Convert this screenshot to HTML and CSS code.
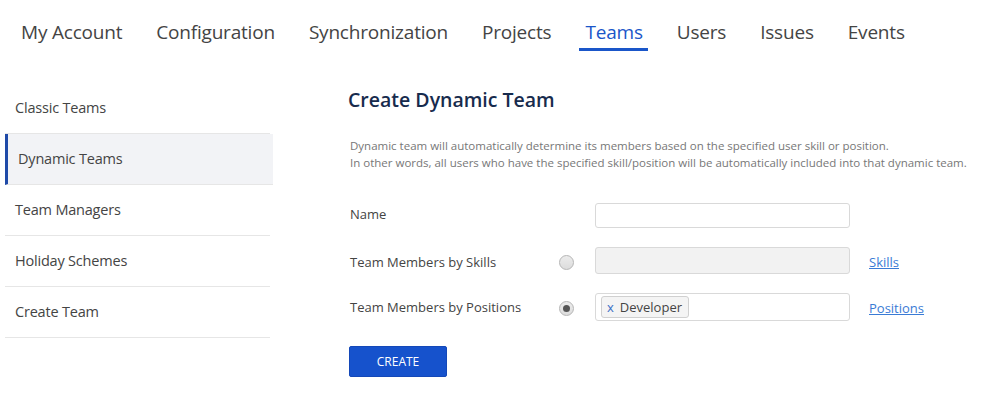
FILE: index.html
```
<!DOCTYPE html>
<html>
<head>
<meta charset="utf-8">
<link rel="stylesheet" href="styles.css">
</head>
<body>
<nav class="topnav">
  <a class="tab">My Account</a>
  <a class="tab">Configuration</a>
  <a class="tab">Synchronization</a>
  <a class="tab">Projects</a>
  <a class="tab active">Teams</a>
  <a class="tab">Users</a>
  <a class="tab">Issues</a>
  <a class="tab">Events</a>
</nav>
<div class="layout">
  <aside class="sidebar">
    <div class="side-item">Classic Teams</div>
    <div class="side-item active">Dynamic Teams</div>
    <div class="side-item">Team Managers</div>
    <div class="side-item">Holiday Schemes</div>
    <div class="side-item">Create Team</div>
  </aside>
  <main class="content">
    <h1 class="title">Create Dynamic Team</h1>
    <p class="desc">Dynamic team will automatically determine its members based on the specified user skill or position.<br>In other words, all users who have the specified skill/position will be automatically included into that dynamic team.</p>
    <div class="form">
      <div class="row r-name">
        <div class="label">Name</div>
        <div class="radio-cell"></div>
        <div class="field"></div>
        <div class="link-cell"></div>
      </div>
      <div class="row r-skills">
        <div class="label">Team Members by Skills</div>
        <div class="radio-cell"><span class="radio"></span></div>
        <div class="field disabled"></div>
        <div class="link-cell"><a class="link">Skills</a></div>
      </div>
      <div class="row r-pos">
        <div class="label">Team Members by Positions</div>
        <div class="radio-cell"><span class="radio checked"></span></div>
        <div class="field tags"><span class="tag"><span class="tag-x">x</span>Developer</span></div>
        <div class="link-cell"><a class="link">Positions</a></div>
      </div>
    </div>
    <button class="btn">CREATE</button>
  </main>
</div>
</body>
</html>
```
FILE: styles.css
```
* { box-sizing: border-box; }
body {
  margin: 0;
  background: #fff;
  font-family: "Open Sans", "Noto Sans", sans-serif;
  color: #444;
}
.topnav {
  display: flex;
  align-items: flex-start;
  gap: 34px;
  padding: 18px 0 0 21px;
  height: 83px;
}
.tab {
  font-size: 19px;
  letter-spacing: -0.2px;
  color: #444;
  line-height: 28px;
  padding: 0 0 3px;
  position: relative;
}
.tab.active {
  color: #1a56c9;
}
.tab.active::after {
  content: "";
  position: absolute;
  left: -6px;
  right: -5px;
  bottom: -2px;
  height: 3px;
  background: #1a56c9;
}
.layout {
  display: flex;
  padding-left: 5px;
}
.sidebar {
  width: 265px;
  flex: none;
}
.side-item {
  height: 51px;
  line-height: 50px;
  font-size: 14.5px;
  color: #444;
  padding-left: 10px;
  border-bottom: 1px solid #e6e6e6;
  letter-spacing: -0.2px;
}
.side-item.active {
  background: #f2f3f6;
  border-left: 3px solid #1f4aa8;
  padding-left: 10px;
  width: 268px;
}
.content {
  padding-left: 78px;
  padding-top: 3px;
}
.title {
  margin: 0;
  font-size: 19.5px;
  font-weight: 600;
  color: #172b4d;
  line-height: 28px;
}
.desc {
  margin: 23px 0 0 2px;
  font-size: 11.5px;
  line-height: 17px;
  color: #777;
}
.form {
  margin-top: 32px;
  padding-left: 2px;
  display: flex;
  flex-direction: column;
  gap: 19px;
}
.row {
  display: flex;
  align-items: center;
}
.r-name { height: 25px; }
.r-skills { height: 27px; }
.r-pos { height: 28px; }
.label {
  width: 206px;
  font-size: 13px;
  color: #444;
}
.r-name .label { margin-top: -4px; }
.r-skills .label { margin-top: 2px; }
.radio-cell {
  width: 39px;
  display: flex;
  align-items: center;
}
.radio {
  width: 15px;
  height: 15px;
  border-radius: 50%;
  border: 1px solid #b5b5b5;
  background: linear-gradient(#ececec, #dcdcdc);
  margin-left: 3px;
  display: flex;
  align-items: center;
  justify-content: center;
}
.r-skills .radio { margin-top: 3px; }
.r-pos .radio { margin-top: 2px; }
.radio.checked::after {
  content: "";
  width: 7px;
  height: 7px;
  border-radius: 50%;
  background: #555;
}
.field {
  width: 255px;
  height: 100%;
  border: 1px solid #d9d9d9;
  border-radius: 3px;
  background: #fff;
}
.field.disabled { background: #f2f2f2; }
.field.tags {
  display: flex;
  align-items: center;
  padding-left: 5px;
}
.tag {
  border: 1px solid #d0d0d0;
  background: #f4f4f4;
  border-radius: 3px;
  font-size: 13px;
  color: #444;
  height: 22px;
  line-height: 20px;
  padding: 0 6px 0 5px;
}
.tag-x {
  color: #3a6fc4;
  margin-right: 6px;
}
.link-cell {
  padding-left: 19px;
}
.link {
  color: #3a7bd5;
  text-decoration: underline;
  font-size: 13px;
}
.btn {
  display: block;
  margin-top: 25px;
  margin-left: 1px;
  width: 98px;
  height: 31px;
  background: #1652cc;
  color: #fff;
  border: 1px solid #1448b8;
  border-radius: 2px;
  font-family: "Open Sans", sans-serif;
  font-size: 12px;
  font-weight: 400;
}
```
